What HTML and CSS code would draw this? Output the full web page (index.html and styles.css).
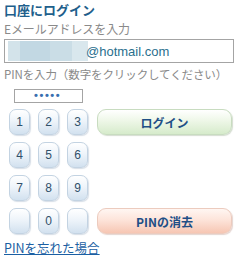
FILE: index.html
```html
<!DOCTYPE html>
<html lang="ja">
<head>
  <meta charset="UTF-8">
  <title>口座にログイン</title>
  <link rel="stylesheet" href="styles.css">
</head>
<body>
  <h1 class="title">口座にログイン</h1>
  <div class="label">Eメールアドレスを入力</div>
  <div class="email">
    <span class="masked">
      <span class="blk b1"></span><span class="blk b2"></span><span class="blk b3"></span><span class="blk b4"></span>
    </span>
    <span class="domain">@hotmail.com</span>
  </div>
  <div class="label">PINを入力（数字をクリックしてください）</div>
  <div class="pin">•••••</div>

  <div class="pad">
    <div class="keys">
      <button class="key">1</button>
      <button class="key">2</button>
      <button class="key">3</button>
      <button class="key">4</button>
      <button class="key">5</button>
      <button class="key">6</button>
      <button class="key">7</button>
      <button class="key">8</button>
      <button class="key">9</button>
      <button class="key"></button>
      <button class="key">0</button>
      <button class="key"></button>
    </div>
    <div class="actions">
      <button class="act login">ログイン</button>
      <button class="act clear">PINの消去</button>
    </div>
  </div>

  <a class="forgot" href="#">PINを忘れた場合</a>
</body>
</html>
```

FILE: styles.css
```css
body {
  margin: 0;
  padding: 1px 4px;
  font-family: "Noto Sans CJK JP", "Liberation Sans", sans-serif;
  background: #ffffff;
  width: 242px;
}

.title {
  margin: 0 0 2px;
  font-size: 13px;
  line-height: 18px;
  font-weight: bold;
  color: #1e5f8c;
}

.label {
  font-size: 12px;
  line-height: 16px;
  color: #8a8a8a;
  letter-spacing: -0.1px;
}

.email + .label {
  font-size: 11.5px;
}

.email {
  display: flex;
  align-items: center;
  box-sizing: border-box;
  width: 230px;
  height: 24px;
  margin: 2px 0 3px;
  border: 1px solid #a4a4a4;
  padding-left: 3px;
}

.masked {
  display: flex;
  height: 20px;
  width: 80px;
}

.blk {
  height: 100%;
}

.b1 { width: 12px; background: #d3e3ea; }
.b2 { width: 30px; background: #c2d8e3; }
.b3 { width: 22px; background: #cadde6; }
.b4 { width: 16px; background: #d9e7ed; }

.domain {
  font-family: "Liberation Sans", sans-serif;
  font-size: 13px;
  color: #2a6f8e;
  margin-left: -2px;
}

.pin {
  box-sizing: border-box;
  width: 69px;
  height: 14px;
  margin: 7px 0 0 10px;
  border: 1px solid #a4a4a4;
  font-family: "Liberation Sans", sans-serif;
  font-size: 11px;
  line-height: 11px;
  letter-spacing: 1.6px;
  color: #3a6fb0;
  padding-left: 19px;
  font-weight: bold;
}

.pad {
  display: flex;
  margin-top: 6px;
}

.keys {
  display: grid;
  grid-template-columns: repeat(3, 21px);
  grid-auto-rows: 26px;
  column-gap: 8px;
  row-gap: 7px;
  margin-left: 5px;
}

.key {
  padding: 0;
  border: 1px solid #c3d3e2;
  border-radius: 7px;
  background: linear-gradient(#ffffff 0%, #eef4fa 45%, #d2e1ef 100%);
  box-shadow: 1px 1px 1px rgba(140, 160, 185, 0.35);
  font-family: "Liberation Sans", sans-serif;
  font-size: 12px;
  color: #30506a;
}

.actions {
  display: flex;
  flex-direction: column;
  justify-content: space-between;
  margin-left: 9px;
  height: 125px;
}

.act {
  width: 135px;
  height: 26px;
  border-radius: 9px;
  font-family: "Noto Sans CJK JP", sans-serif;
  font-size: 12px;
  font-weight: bold;
  color: #1f4f86;
  padding: 0;
}

.login {
  border: 1px solid #c8dcc0;
  background: linear-gradient(#ffffff 0%, #f0f8ea 40%, #d6ebcb 100%);
  box-shadow: 1px 1px 1px rgba(150, 170, 140, 0.4);
}

.clear {
  border: 1px solid #eccbbe;
  background: linear-gradient(#fff6f2 0%, #fde4da 45%, #f6c6b3 100%);
  box-shadow: 1px 1px 1px rgba(190, 150, 140, 0.4);
}

.forgot {
  display: inline-block;
  margin-top: 6px;
  font-size: 12.5px;
  line-height: 16px;
  color: #1b5fa3;
  text-decoration: underline;
}
```
